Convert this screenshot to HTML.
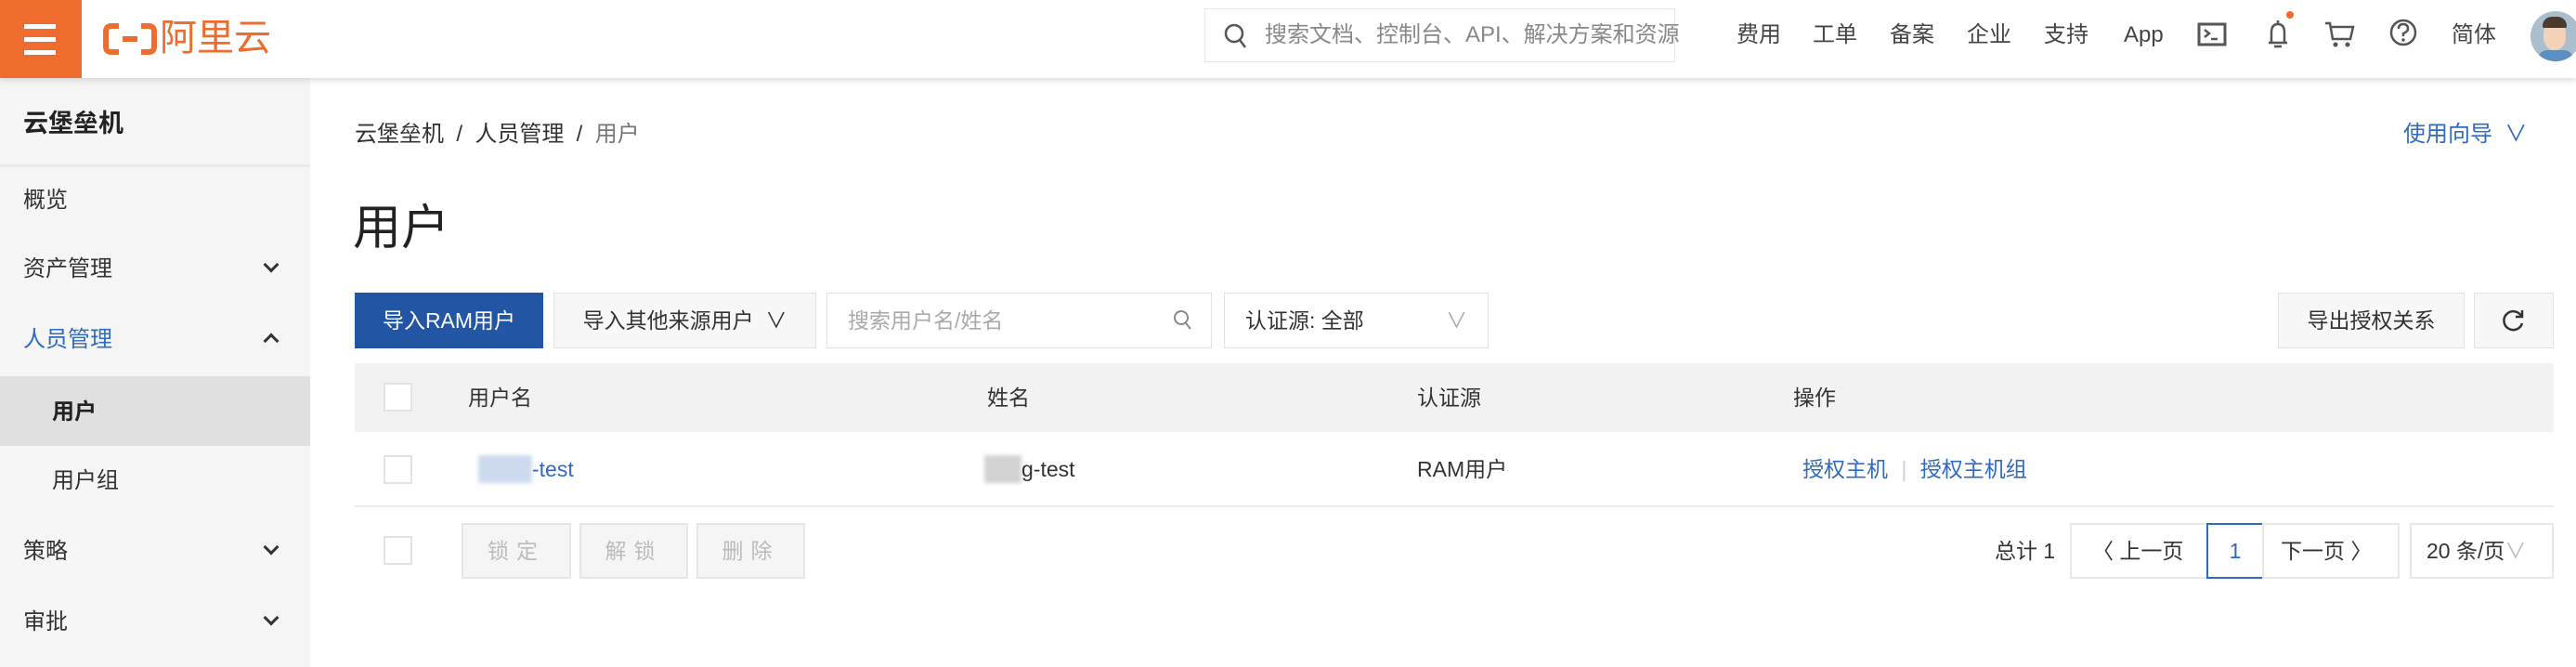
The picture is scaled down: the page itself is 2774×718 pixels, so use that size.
<!DOCTYPE html>
<html><head><meta charset="utf-8"><style>
*{margin:0;padding:0;box-sizing:border-box}
body{width:2774px;height:718px;overflow:hidden;background:#fff;font-family:"Liberation Sans","Noto Sans CJK SC",sans-serif;color:#333;position:relative}
.a{position:absolute;white-space:nowrap}
.hdr{position:absolute;left:0;top:0;width:2774px;height:84px;background:#fff;box-shadow:0 3px 6px rgba(0,0,0,.12);z-index:5}
.side{position:absolute;left:0;top:84px;width:334px;height:634px;background:#f5f5f5}
.si{position:absolute;left:25px;font-size:24px;color:#333;line-height:30px}
.chev{position:absolute;left:286px;width:12px;height:12px;border-right:3px solid #333;border-bottom:3px solid #333;transform:rotate(45deg)}
.chev.up{transform:rotate(-135deg)}
.btn{position:absolute;top:315px;height:60px;border:1px solid #e2e2e2;background:#f7f7f7;font-size:23px;line-height:58px;text-align:center;color:#333}
.cb{position:absolute;left:413px;width:31px;height:31px;border:2px solid #e3e3e3;background:#fff}
.fb{position:absolute;top:563px;height:60px;border:2px solid #e6e6e6;background:#f5f5f5;color:#bbb;font-size:23px;line-height:56px;text-align:center;letter-spacing:8px}
.pg{position:absolute;top:563px;height:60px;border:2px solid #e8e8e8;background:#fff;font-size:23px;line-height:56px;color:#333}
.t{font-size:23px;line-height:30px}
.blue{color:#2f6bc0}
.nav{position:absolute;top:22px;font-size:24px;line-height:32px;color:#444}
</style></head><body>
<div class="hdr">
 <div class="a" style="left:0;top:0;width:88px;height:84px;background:#ed6c2e"></div>
 <div class="a" style="left:26px;top:26px;width:34px;height:5px;background:#fff"></div>
 <div class="a" style="left:26px;top:40px;width:34px;height:5px;background:#fff"></div>
 <div class="a" style="left:26px;top:54px;width:34px;height:5px;background:#fff"></div>
 <svg class="a" style="left:110px;top:24px" width="60" height="36" viewBox="0 0 60 36"><path d="M18 4H10Q4 4 4 10V26Q4 32 10 32H18M42 4H50Q56 4 56 10V26Q56 32 50 32H42M22 18H38" fill="none" stroke="#ed6c2e" stroke-width="6"/></svg>
 <div class="a" style="left:172px;top:18px;font-size:40px;line-height:46px;color:#ed6c2e">阿里云</div>
 <div class="a" style="left:1297px;top:9px;width:507px;height:58px;border:1px solid #e6e6e6"></div>
 <svg class="a" style="left:1318px;top:24px" width="26" height="30" viewBox="0 0 26 30"><circle cx="11" cy="12" r="9" fill="none" stroke="#555" stroke-width="2.5"/><path d="M17 19L23 27" stroke="#555" stroke-width="2.5"/></svg>
 <div class="a" style="left:1362px;top:22px;font-size:24px;line-height:32px;color:#888">搜索文档、控制台、API、解决方案和资源</div>
 <div class="nav" style="left:1870px">费用</div>
 <div class="nav" style="left:1952px">工单</div>
 <div class="nav" style="left:2035px">备案</div>
 <div class="nav" style="left:2118px">企业</div>
 <div class="nav" style="left:2201px">支持</div>
 <div class="nav" style="left:2287px">App</div>
 <svg class="a" style="left:2366px;top:24px" width="32" height="26" viewBox="0 0 32 26"><rect x="2" y="2" width="28" height="22" fill="none" stroke="#555" stroke-width="3"/><path d="M8 8L13 12L8 16M15 18H22" fill="none" stroke="#555" stroke-width="2.5"/></svg>
 <svg class="a" style="left:2438px;top:20px" width="30" height="34" viewBox="0 0 30 34"><path d="M5 26H25M8 26V15Q8 6 15 6Q22 6 22 15V26M11 30H19M15 2V6" fill="none" stroke="#555" stroke-width="2.5"/></svg>
 <div class="a" style="left:2462px;top:12px;width:8px;height:8px;border-radius:50%;background:#ed6c2e"></div>
 <svg class="a" style="left:2503px;top:22px" width="34" height="30" viewBox="0 0 34 30"><path d="M1 3H6L9 20H28L31 7H8" fill="none" stroke="#555" stroke-width="2.5"/><circle cx="12" cy="26" r="2.5" fill="#555"/><circle cx="25" cy="26" r="2.5" fill="#555"/></svg>
 <svg class="a" style="left:2572px;top:19px" width="32" height="32" viewBox="0 0 32 32"><circle cx="16" cy="16" r="13" fill="none" stroke="#555" stroke-width="2.5"/><path d="M11 12Q11 7 16 7Q21 7 21 12Q21 15 16 17V20" fill="none" stroke="#555" stroke-width="2.5"/><circle cx="16" cy="24" r="1.7" fill="#555"/></svg>
 <div class="nav" style="left:2640px">简体</div>
 <div class="a" style="left:2725px;top:12px;width:54px;height:54px;border-radius:50%;background:#a9bfcf;overflow:hidden">
  <div class="a" style="left:14px;top:10px;width:24px;height:32px;border-radius:45%;background:#f2d2b8"></div>
  <div class="a" style="left:13px;top:6px;width:26px;height:12px;border-radius:10px 10px 2px 2px;background:#4a3a30"></div>
  <div class="a" style="left:8px;top:42px;width:38px;height:20px;border-radius:10px;background:#5b8fbf"></div>
 </div>
</div>

<div class="side">
 <div class="a" style="left:25px;top:32px;font-size:27px;font-weight:bold;line-height:34px;color:#222">云堡垒机</div>
 <div class="a" style="left:0;top:93px;width:334px;height:3px;background:#ebebeb"></div>
 <div class="si" style="top:117px">概览</div>
 <div class="si" style="top:191px">资产管理</div><div class="chev" style="top:195px"></div>
 <div class="si" style="top:267px;color:#2f6bc0">人员管理</div><div class="chev up" style="top:277px"></div>
 <div class="a" style="left:0;top:321px;width:334px;height:75px;background:#e0e0e0"></div>
 <div class="si" style="left:56px;top:345px;font-weight:bold;color:#222">用户</div>
 <div class="si" style="left:56px;top:419px">用户组</div>
 <div class="si" style="top:495px">策略</div><div class="chev" style="top:499px"></div>
 <div class="si" style="top:571px">审批</div><div class="chev" style="top:575px"></div>
</div>

<div class="a" style="left:382px;top:130px;font-size:24px;line-height:30px;color:#333">云堡垒机 &nbsp;/&nbsp; 人员管理 &nbsp;/&nbsp; <span style="color:#777">用户</span></div>
<div class="a blue" style="left:2588px;top:130px;font-size:24px;line-height:30px">使用向导 &nbsp;∨</div>
<div class="a" style="left:380px;top:214px;font-size:52px;line-height:64px;color:#222">用户</div>

<div class="btn" style="left:382px;width:203px;background:#2256a5;border-color:#2256a5;color:#fff">导入RAM用户</div>
<div class="btn" style="left:596px;width:283px">导入其他来源用户 &nbsp;∨</div>
<div class="btn" style="left:890px;width:415px;background:#fff;text-align:left;padding-left:22px;color:#aaa">搜索用户名/姓名</div>
<svg class="a" style="left:1262px;top:332px" width="24" height="26" viewBox="0 0 24 26"><circle cx="10" cy="10" r="7" fill="none" stroke="#888" stroke-width="2"/><path d="M15 16L20 22" stroke="#888" stroke-width="2"/></svg>
<div class="btn" style="left:1318px;width:285px;background:#fff;text-align:left;padding-left:22px">认证源: 全部<span style="position:absolute;right:22px;color:#aaa">∨</span></div>
<div class="btn" style="left:2453px;width:201px">导出授权关系</div>
<div class="btn" style="left:2664px;width:86px"></div>
<svg class="a" style="left:2694px;top:332px" width="26" height="26" viewBox="0 0 26 26"><path d="M21 8A10 10 0 1 0 22 16" fill="none" stroke="#333" stroke-width="2.5"/><path d="M22 2V9H15" fill="none" stroke="#333" stroke-width="2.5"/></svg>

<div class="a" style="left:382px;top:391px;width:2368px;height:74px;background:#f2f2f2"></div>
<div class="cb" style="top:412px"></div>
<div class="a t" style="left:504px;top:413px">用户名</div>
<div class="a t" style="left:1063px;top:413px">姓名</div>
<div class="a t" style="left:1526px;top:413px">认证源</div>
<div class="a t" style="left:1931px;top:413px">操作</div>

<div class="cb" style="top:490px"></div>
<div class="a" style="left:515px;top:490px;width:58px;height:30px;background:#cdd9ee;filter:blur(2px)"></div>
<div class="a t blue" style="left:573px;top:490px">-test</div>
<div class="a" style="left:1060px;top:490px;width:40px;height:30px;background:#d2d2d2;filter:blur(2px)"></div>
<div class="a t" style="left:1100px;top:490px">g-test</div>
<div class="a t" style="left:1526px;top:490px">RAM用户</div>
<div class="a t blue" style="left:1941px;top:490px">授权主机 <span style="color:#ccc;margin:0 8px">|</span> 授权主机组</div>
<div class="a" style="left:382px;top:544px;width:2368px;height:2px;background:#ececec"></div>

<div class="cb" style="top:577px"></div>
<div class="fb" style="left:497px;width:118px">锁定</div>
<div class="fb" style="left:624px;width:117px">解锁</div>
<div class="fb" style="left:750px;width:117px">删除</div>

<div class="a t" style="left:2148px;top:578px">总计 1</div>
<div class="pg" style="left:2229px;width:149px;padding-left:22px">〈 上一页</div>
<div class="pg" style="left:2376px;width:62px;border-color:#2f6bc0;color:#2f6bc0;text-align:center">1</div>
<div class="pg" style="left:2436px;width:148px;padding-left:18px">下一页 〉</div>
<div class="pg" style="left:2595px;width:155px;padding-left:16px">20 条/页<span style="color:#bbb">∨</span></div>
</body></html>
